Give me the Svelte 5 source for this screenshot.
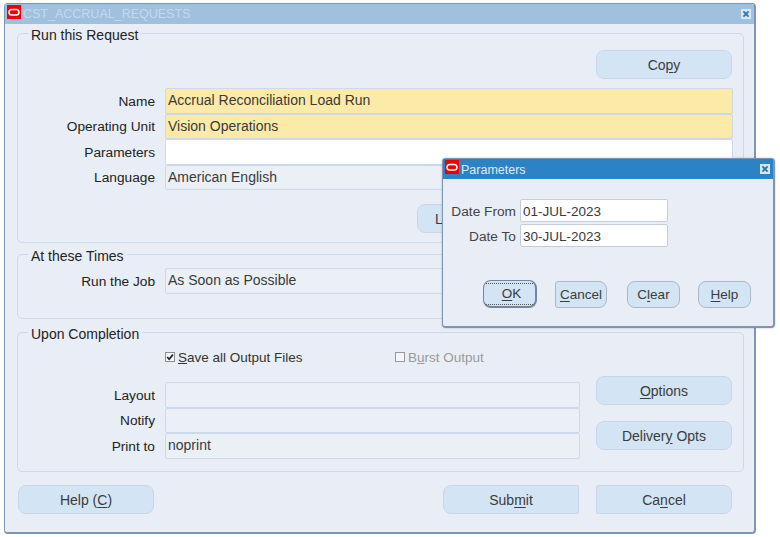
<script>
	const dialogButtons = [
		{ before: '', key: 'C', after: 'ancel', cls: 'squarish' },
		{ before: 'C', key: 'l', after: 'ear', cls: '' },
		{ before: '', key: 'H', after: 'elp', cls: '' }
	];
</script>

{#snippet logo()}
	<svg class="logo" viewBox="0 0 14 14" aria-hidden="true">
		<rect width="14" height="14" fill="#ee0000" />
		<rect x="2" y="4.4" width="10" height="5.6" rx="2.8" fill="none" stroke="#fff" stroke-width="1.5" />
	</svg>
{/snippet}

{#snippet closeBox()}
	<svg class="close" viewBox="0 0 10 10" aria-hidden="true">
		<rect width="10" height="10" fill="#d9e7f4" />
		<path d="M2.4 2.4 7.6 7.6M7.6 2.4 2.4 7.6" stroke="#2b78b8" stroke-width="2" />
	</svg>
{/snippet}

<div class="window main">
	<div class="titlebar inactive">
		{@render logo()}
		<span class="title">CST_ACCRUAL_REQUESTS</span>
		{@render closeBox()}
	</div>

	<div class="body">
		<section class="group first">
			<div class="legend">Run this Request</div>
			<div class="copy-row">
				<button class="btn">Co<u>p</u>y</button>
			</div>
			<div class="rows">
				<span class="label">Name</span>
				<div class="field required">Accrual Reconciliation Load Run</div>
				<span class="label">Operating Unit</span>
				<div class="field required">Vision Operations</div>
				<span class="label">Parameters</span>
				<div class="field white"></div>
				<span class="label">Language</span>
				<div class="field">American English</div>
			</div>
			<div class="lang-row">
				<!-- the dialog covers everything after the first letter -->
				<button class="btn covered">L</button>
			</div>
		</section>

		<section class="group second">
			<div class="legend">At these Times</div>
			<div class="rows job">
				<span class="label">Run the Job</span>
				<div class="field">As Soon as Possible</div>
			</div>
		</section>

		<section class="group third">
			<div class="legend">Upon Completion</div>
			<div class="checks">
				<span class="check">
					<svg class="box" viewBox="0 0 10 10" aria-hidden="true">
						<rect x="0.5" y="0.5" width="9" height="9" fill="#f4f6fa" stroke="#8a8f96" />
						<path d="M2.2 5 4.2 7.2 7.9 2.6" fill="none" stroke="#222" stroke-width="1.7" />
					</svg>
					<span><u>S</u>ave all Output Files</span>
				</span>
				<span class="check disabled">
					<svg class="box" viewBox="0 0 10 10" aria-hidden="true">
						<rect x="0.5" y="0.5" width="9" height="9" fill="#f4f6fa" stroke="#9a9a9a" />
					</svg>
					<span>B<u>u</u>rst Output</span>
				</span>
			</div>
			<div class="lower">
				<div class="rows output">
					<span class="label">Layout</span>
					<div class="field"></div>
					<span class="label">Notify</span>
					<div class="field"></div>
					<span class="label">Print to</span>
					<div class="field">noprint</div>
				</div>
				<div class="side">
					<button class="btn"><u>O</u>ptions</button>
					<button class="btn">Deliver<u>y</u> Opts</button>
				</div>
			</div>
		</section>

		<footer class="actions">
			<button class="btn">Help (<u>C</u>)</button>
			<button class="btn left-round push">Sub<u>m</u>it</button>
			<button class="btn right-round">Ca<u>n</u>cel</button>
		</footer>
	</div>
</div>

<div class="window dialog">
	<div class="titlebar active">
		{@render logo()}
		<span class="title">Parameters</span>
		{@render closeBox()}
	</div>
	<div class="dialog-body">
		<div class="rows dates">
			<span class="label">Date From</span>
			<div class="field white">01-JUL-2023</div>
			<span class="label">Date To</span>
			<div class="field white">30-JUL-2023</div>
		</div>
		<div class="dialog-actions">
			<button class="btn small focused"><span class="dots"><u>O</u>K</span></button>
			{#each dialogButtons as b}
				<button class="btn small {b.cls}">{b.before}<u>{b.key}</u>{b.after}</button>
			{/each}
		</div>
	</div>
</div>

<style>
	:global(body) {
		background: #fff;
		font-family: 'Liberation Sans', Arial, sans-serif;
		font-size: 14px;
		color: #333;
	}

	/* the two windows sit on a free desktop */
	.window {
		position: absolute;
		box-sizing: border-box;
		background: #e9eef6;
		border: 1px solid #7f95b6;
		border-right-width: 2px;
		border-bottom-width: 2px;
		border-radius: 4px;
	}

	.main {
		left: 4px;
		top: 3px;
		width: 752px;
		height: 531px;
	}

	.dialog {
		left: 442px;
		top: 158px;
		width: 333px;
		height: 170px;
		box-shadow: 0 0 2px rgba(60, 80, 110, 0.4);
	}

	.titlebar {
		display: flex;
		align-items: center;
		height: 20px;
		padding: 0 3px 0 2px;
		box-sizing: border-box;
	}

	.titlebar.inactive {
		background: #9fc1df;
		color: #c6d8ea;
	}

	.titlebar.active {
		background: #2b82c4;
		color: #dfeaf5;
	}

	.logo {
		width: 14px;
		height: 14px;
		margin-top: -4px;
		flex: none;
	}

	.title {
		margin-left: 2px;
		flex: 1;
		font-size: 12.5px;
		line-height: 20px;
	}

	.active .title {
		padding-top: 1px;
	}

	.close {
		width: 10px;
		height: 10px;
		flex: none;
	}

	.body {
		padding: 9px 10px 0 12px;
	}

	.group {
		border: 1px solid #cbd9ea;
		border-radius: 5px;
		box-sizing: border-box;
	}

	.first {
		height: 210px;
	}

	.second {
		height: 65px;
		margin-top: 11px;
	}

	.third {
		height: 140px;
		margin-top: 13px;
	}

	.legend {
		width: fit-content;
		height: 16px;
		line-height: 16px;
		margin: -7px 0 0 10px;
		padding: 0 3px;
		background: #e9eef6;
		color: #222;
	}

	.copy-row,
	.lang-row {
		display: flex;
		justify-content: flex-end;
	}

	.copy-row {
		margin: 7px 11px 9px 0;
	}

	.lang-row {
		margin: 14px 190px 0 0;
	}

	.rows {
		display: grid;
		grid-template-columns: 137px 1fr;
		column-gap: 10px;
		grid-auto-rows: 25.5px;
		padding-right: 10px;
	}

	.label {
		text-align: right;
		align-self: center;
		padding-top: 1px;
		font-size: 13.7px;
		color: #222;
	}

	.field {
		box-sizing: border-box;
		height: 100%;
		padding: 0 2px;
		line-height: 23px;
		background: #ebf0f6;
		border: 1px solid #cbd9ea;
		border-radius: 2px;
		white-space: nowrap;
		overflow: hidden;
		color: #3a3a3a;
	}

	.required {
		background: #fceaa8;
	}

	.white {
		background: #fff;
	}

	.job {
		margin-top: 4px;
	}

	.checks {
		display: flex;
		height: 31px;
		align-items: center;
		padding: 0 0 0 147px;
		font-size: 13.5px;
	}

	.check {
		display: inline-flex;
		align-items: center;
		gap: 3px;
		width: 230px;
		color: #333;
	}

	.check.disabled {
		color: #9a9a9a;
	}

	.box {
		width: 10px;
		height: 10px;
		flex: none;
		margin-top: -2px;
	}

	.lower {
		display: flex;
		gap: 16px;
		margin-top: 3px;
	}

	.output {
		flex: none;
		width: 562px;
		padding: 6px 0 0;
	}

	.side {
		display: flex;
		flex-direction: column;
		gap: 16px;
	}

	.btn {
		box-sizing: border-box;
		width: 136px;
		height: 29px;
		padding: 0;
		background: #d3e4f4;
		border: 1px solid #c6d7ea;
		border-radius: 8px;
		font: inherit;
		color: #3c3c3c;
	}

	.btn u {
		text-underline-offset: 2px;
	}

	.covered {
		text-align: left;
		padding-left: 17px;
	}

	.left-round {
		border-radius: 8px 2px 2px 8px;
	}

	.right-round {
		border-radius: 2px 8px 8px 2px;
	}

	.actions {
		display: flex;
		gap: 17px;
		margin: 13px 12px 0 1px;
	}

	.push {
		margin-left: auto;
	}

	.dialog-body {
		padding: 20px 0 0;
	}

	.dates {
		grid-template-columns: 73px 148px;
		column-gap: 4px;
		grid-auto-rows: 23px;
		row-gap: 2px;
		padding: 0;
	}

	.dates .label {
		color: #444;
	}

	.dates .field {
		border-color: #c3cedd;
		font-size: 13.5px;
		line-height: 23px;
		padding: 0 2px;
	}

	.dialog-actions {
		display: flex;
		align-items: center;
		margin: 33px 0 0 40px;
	}

	.btn.small {
		width: 53px;
		height: 27px;
		margin-left: 18px;
		border-color: #aab8ca;
		font-size: 13.5px;
	}

	.btn.squarish {
		width: 52px;
		border-radius: 3px 8px 8px 3px;
	}

	.btn.squarish + .btn {
		margin-left: 20px;
	}

	.btn.focused {
		width: 54px;
		height: 28px;
		margin-left: 0;
		padding: 1px 2px;
		border: 1px solid #6f86a5;
		border-right-width: 2px;
		border-bottom-width: 2px;
	}

	.dots {
		display: block;
		padding-left: 4px;
		line-height: 20px;
		border-top: 1px dotted #555;
		border-bottom: 1px dotted #555;
	}
</style>
